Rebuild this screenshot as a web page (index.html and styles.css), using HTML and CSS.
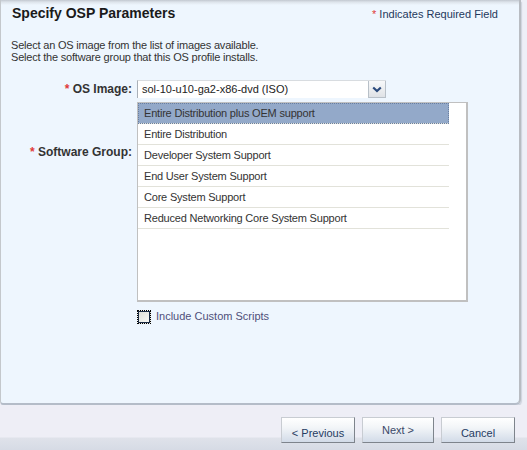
FILE: index.html
```html
<!DOCTYPE html>
<html>
<head>
<meta charset="utf-8">
<link rel="stylesheet" href="styles.css">
</head>
<body>
<div class="page">
  <div class="panel">
    <div class="header">
      <h1 class="title">Specify OSP Parameters</h1>
      <div class="req"><span class="star">*</span> Indicates Required Field</div>
    </div>
    <div class="desc">
      <div>Select an OS image from the list of images available.</div>
      <div>Select the software group that this OS profile installs.</div>
    </div>
    <div class="form">
      <div class="label label-os"><span class="star">*</span> OS Image:</div>
      <div class="select">
        <span class="select-text">sol-10-u10-ga2-x86-dvd (ISO)</span>
        <span class="select-btn">
          <svg width="10" height="7" viewBox="0 0 10 7"><path d="M1.2 1.5 L5 5 L8.8 1.5" fill="none" stroke="#2b4a7c" stroke-width="2.2"/></svg>
        </span>
      </div>
      <div class="label label-sw"><span class="star">*</span> Software Group:</div>
      <div class="listbox">
        <div class="items">
          <div class="item selected">Entire Distribution plus OEM support</div>
          <div class="item">Entire Distribution</div>
          <div class="item">Developer System Support</div>
          <div class="item">End User System Support</div>
          <div class="item">Core System Support</div>
          <div class="item">Reduced Networking Core System Support</div>
        </div>
      </div>
      <div></div>
      <label class="check">
        <span class="box"></span>
        <span class="check-text">Include Custom Scripts</span>
      </label>
    </div>
  </div>
  <div class="footer">
    <button class="btn btn-prev">&lt; Previous</button>
    <button class="btn btn-next">Next &gt;</button>
    <button class="btn btn-cancel">Cancel</button>
  </div>
</div>
</body>
</html>
```

FILE: styles.css
```css
html, body {
  margin: 0;
  padding: 0;
}
body {
  width: 527px;
  height: 450px;
  overflow: hidden;
  font-family: "Liberation Sans", Arial, sans-serif;
  font-size: 11px;
  color: #333;
  background: #eeeff7;
}
.page {
  display: flex;
  flex-direction: column;
  height: 450px;
}
.panel {
  width: 518px;
  height: 403px;
  box-sizing: content-box;
  background: #eef6fe linear-gradient(to bottom, #c2c8d0 0px, #dde3ea 2px, #eef6fe 5px);
  border-left: 1px solid #c4c8cc;
  border-right: 2px solid #b8bcc2;
  border-bottom: 2px solid #b4bcc8;
  border-bottom-right-radius: 6px;
  border-bottom-left-radius: 4px;
  box-shadow: 1px 2px 1px rgba(150, 160, 175, 0.35);
  display: flex;
  flex-direction: column;
}
.header {
  display: flex;
  justify-content: space-between;
  align-items: baseline;
  padding: 4px 21px 0 11px;
}
.title {
  margin: 0;
  font-size: 14px;
  font-weight: bold;
  color: #1a1a1a;
  line-height: 18px;
}
.req {
  color: #24385c;
  font-size: 11px;
}
.star {
  color: #e03a3a;
}
.desc {
  padding: 17px 0 0 10px;
  line-height: 12px;
  letter-spacing: -0.2px;
  color: #333;
}
.form {
  display: grid;
  grid-template-columns: 131px 330px;
  column-gap: 5px;
  padding-top: 17px;
  align-items: start;
}
.label {
  text-align: right;
  font-weight: bold;
  font-size: 12px;
  color: #333;
}
.label-os {
  line-height: 18px;
}
.label-sw {
  padding-top: 43px;
}
.select {
  width: 249px;
  height: 18px;
  box-sizing: border-box;
  display: flex;
  background: #fff;
  border-left: 1px solid #a9b0b8;
  border-top: 1px solid #d8dce0;
  margin-bottom: 4px;
}
.select-text {
  flex: 1;
  padding-left: 4px;
  line-height: 17px;
  color: #222;
}
.select-btn {
  width: 18px;
  display: flex;
  align-items: center;
  justify-content: center;
  box-sizing: border-box;
  border: 1px solid #b8c0c8;
  border-top: none;
  background: linear-gradient(to bottom, #f8f9fa, #dfe2e6);
}
.listbox {
  width: 331px;
  height: 200px;
  box-sizing: border-box;
  background: #fff;
  border: 1px solid #c0c0c0;
  border-right-width: 2px;
  border-bottom-width: 2px;
}
.items {
  width: 311px;
}
.item {
  height: 21px;
  line-height: 20px;
  box-sizing: border-box;
  padding-left: 6px;
  border-bottom: 1px solid #e2e2da;
  letter-spacing: -0.2px;
  color: #333;
}
.item.selected {
  background: #93a9c9;
  outline: 1px dotted #6a7fa0;
  outline-offset: -1px;
}
.check {
  display: flex;
  align-items: center;
  gap: 5px;
  margin-top: 8px;
}
.box {
  width: 14px;
  height: 14px;
  box-sizing: border-box;
  border: 1px dotted #000;
  outline: 1px solid #1c2c44;
  outline-offset: -2px;
  background: linear-gradient(135deg, #dcdcd4, #fbfbf8);
}
.check-text {
  color: #4f4f7a;
  line-height: 14px;
  position: relative;
  top: -1px;
}
.footer {
  flex: 1;
  display: flex;
  justify-content: flex-end;
  align-items: flex-start;
  gap: 7px;
  padding: 12px 12px 0 0;
  background: linear-gradient(to bottom, #eeeef6 0, #eeeef6 32px, #dfe2ea 33px, #d6dbe5 45px);
}
.btn {
  width: 74px;
  height: 26px;
  box-sizing: border-box;
  font-family: "Liberation Sans", Arial, sans-serif;
  font-size: 11px;
  color: #263c62;
  padding: 5px 0 0 0;
  border: 1px solid #c8ccd2;
  border-right-color: #7e848c;
  border-bottom-color: #7e848c;
  background: linear-gradient(to bottom, #ffffff 0%, #f2f5f8 40%, #d2dbe8 100%);
  cursor: default;
}
.btn-next {
  width: 72px;
  padding-top: 0;
  color: #3a4868;
}
```
